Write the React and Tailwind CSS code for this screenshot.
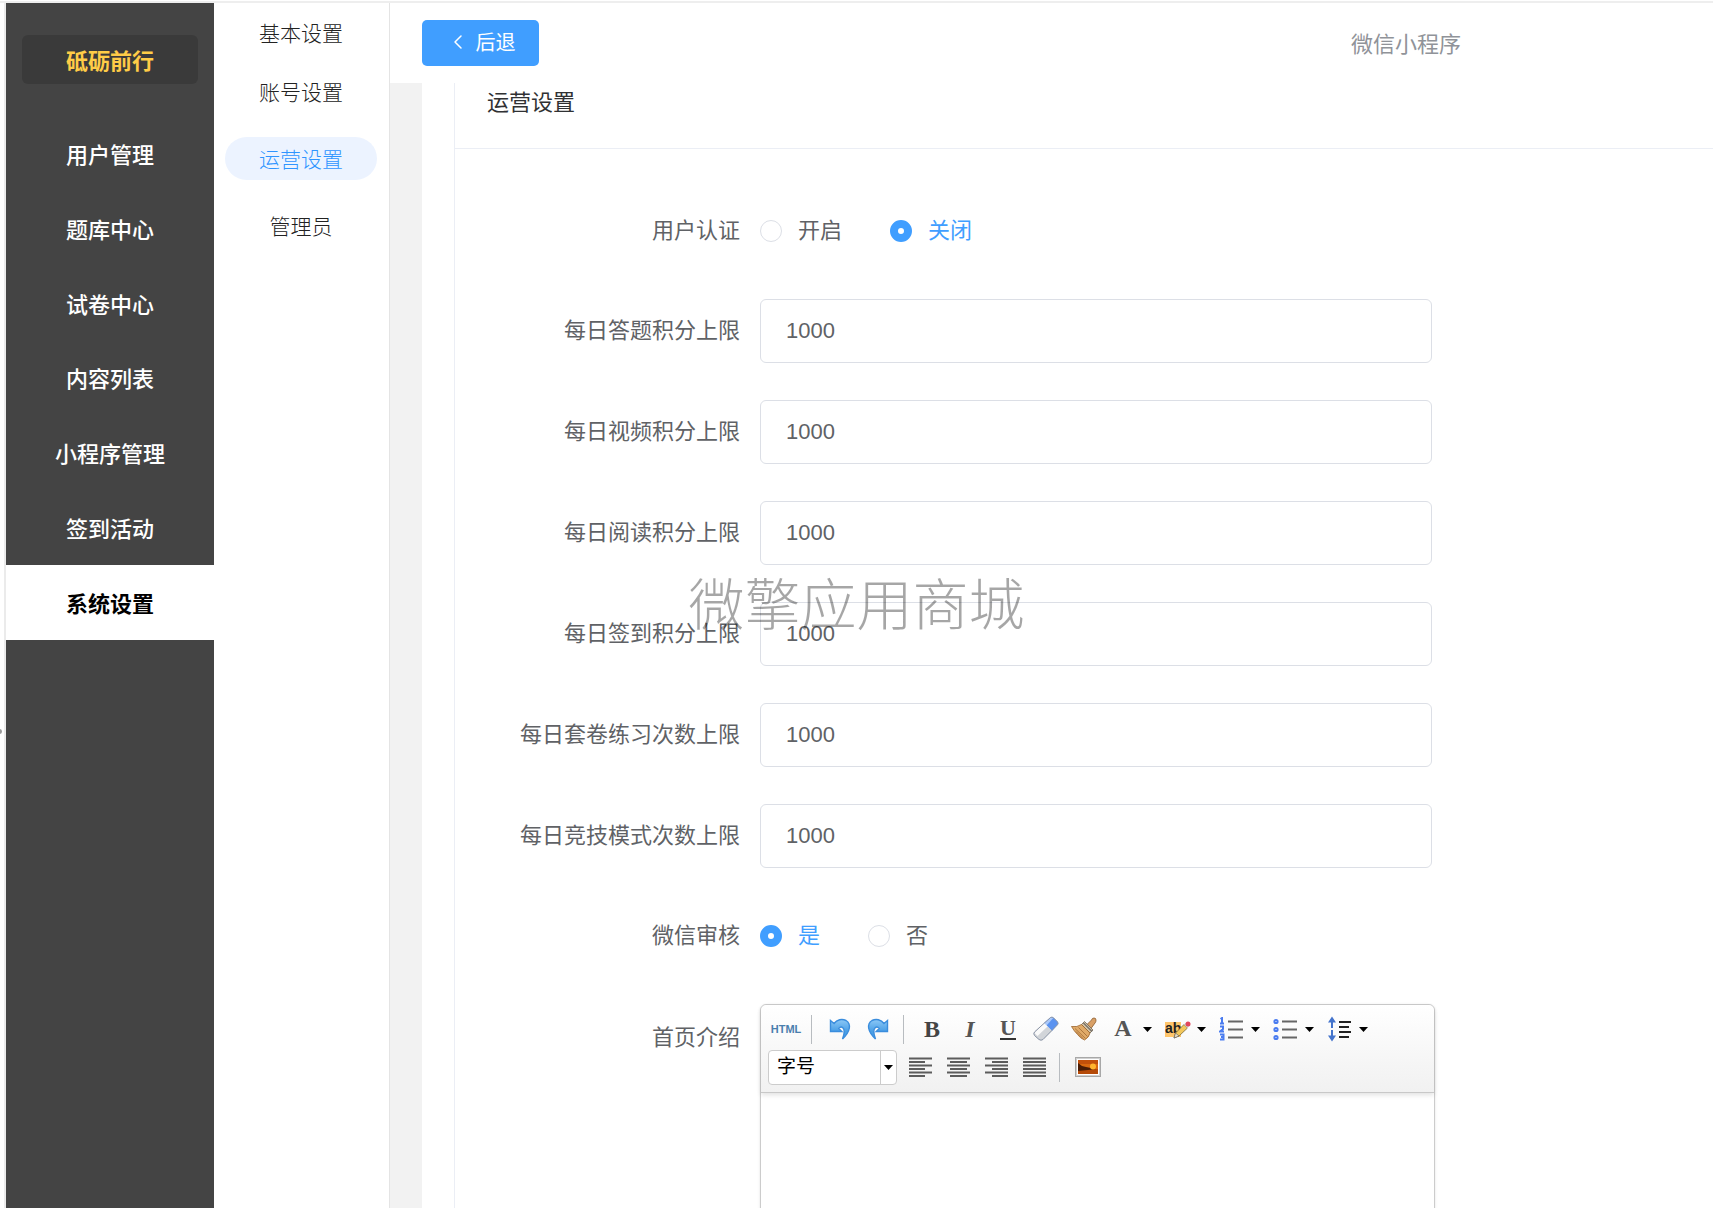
import { useState } from "react";
import { ChevronLeft } from "lucide-react";

const MENU = ["用户管理", "题库中心", "试卷中心", "内容列表", "小程序管理", "签到活动", "系统设置"];
const SUB_MENU = ["基本设置", "账号设置", "运营设置", "管理员"];

const LIMITS = [
  { id: "answer", label: "每日答题积分上限" },
  { id: "video", label: "每日视频积分上限" },
  { id: "read", label: "每日阅读积分上限" },
  { id: "sign", label: "每日签到积分上限" },
  { id: "paper", label: "每日套卷练习次数上限" },
  { id: "arena", label: "每日竞技模式次数上限" },
];

function Sidebar() {
  return (
    <aside className="w-[210px] shrink-0 border-l-2 border-[#ebebeb] bg-[#444] pt-8">
      <div className="mx-4 flex h-[49px] items-center justify-center rounded-md bg-[#3a3a3a] pb-0.5 font-bold text-[#ffcc47]">
        砥砺前行
      </div>
      <nav className="mt-[33px] grid h-[523px] grid-rows-7">
        {MENU.map((item) => (
          <a
            key={item}
            href="#"
            className={
              item === "系统设置"
                ? "flex items-center justify-center bg-white pb-0.5 font-bold text-black"
                : "flex items-center justify-center pb-0.5 font-medium text-white"
            }
          >
            {item}
          </a>
        ))}
      </nav>
    </aside>
  );
}

function SubMenu() {
  return (
    <nav className="flex w-[176px] shrink-0 flex-col gap-4 border-r border-[#e4e4e4] pt-2 pr-3 pl-[11px] text-[21px] font-light">
      {SUB_MENU.map((item) => (
        <a
          key={item}
          href="#"
          className={
            item === "运营设置"
              ? "my-2 flex h-[43px] items-center justify-center rounded-full bg-[#ecf3ff] pb-0.5 text-[#2f95ff]"
              : "flex h-[43px] items-center justify-center pb-0.5 text-[#222]"
          }
        >
          {item}
        </a>
      ))}
    </nav>
  );
}

function RadioRow({ label, name, options, initial }) {
  const [value, setValue] = useState(initial);

  return (
    <div role="radiogroup" aria-label={label} className="flex h-[62px] items-center gap-5">
      <span className="w-[255px] shrink-0 text-right">{label}</span>
      <div className="flex gap-12">
        {options.map((o) => (
          <label
            key={o}
            className={value === o ? "flex items-center gap-4 text-[#409eff]" : "flex items-center gap-4"}
          >
            <input
              type="radio"
              name={name}
              checked={value === o}
              onChange={() => setValue(o)}
              className="size-[22px] appearance-none rounded-full border border-[#dcdfe6] bg-white checked:border-8 checked:border-[#409eff]"
            />
            {o}
          </label>
        ))}
      </div>
    </div>
  );
}

function LimitRow({ id, label }) {
  return (
    <div className="flex items-center gap-5">
      <label htmlFor={id} className="w-[255px] shrink-0 text-right">
        {label}
      </label>
      <input
        id={id}
        type="text"
        defaultValue="1000"
        className="h-16 w-full max-w-[672px] rounded-md border border-[#dcdfe6] px-[25px] outline-none"
      />
    </div>
  );
}

function Caret() {
  return (
    <svg width="9" height="5" viewBox="0 0 9 5" aria-hidden="true">
      <path d="M0 0h9L4.500 5z" fill="#000" />
    </svg>
  );
}

function Tool({ title, children }) {
  return (
    <button type="button" title={title} className="flex h-[38px] w-[38px] shrink-0 items-center justify-center">
      {children}
    </button>
  );
}

function DropTool({ title, children }) {
  return (
    <button type="button" title={title} className="flex h-[38px] w-[54px] shrink-0 items-center gap-2 pl-2">
      {children}
      <Caret />
    </button>
  );
}

function Separator() {
  return <span className="mr-[9px] ml-1.5 h-[29px] w-px shrink-0 bg-[#b8bcc0]" />;
}

function UndoArrow({ flip }) {
  return (
    <svg width="24" height="24" viewBox="0 0 24 24" className={flip ? "-scale-x-100" : ""}>
      <defs>
        <linearGradient id="undoFill" x1="0" y1="0" x2="0" y2="1">
          <stop offset="0" stopColor="#8cc8f6" />
          <stop offset="0.600" stopColor="#4a9fe6" />
          <stop offset="1" stopColor="#4a9fe6" />
        </linearGradient>
      </defs>
      <path
        d="M2.500 3.500l3.500 3C9 2.500 14 1.500 18 3.500c5.500 3.500 4.500 11-3.500 18.500 2-5.500 2.500-9.500.3-11.300-1.400-1.100-2.800-.6-4 .8l3 3H2.500z"
        fill="url(#undoFill)"
        stroke="#3a8ddd"
        strokeWidth="1.400"
      />
    </svg>
  );
}

function Eraser() {
  return (
    <svg width="28" height="26" viewBox="0 0 28 26">
      <path d="M12 7L18.500 1.500q1.500-1 3 .3l4 4q1.300 1.500 0 3L20 15z" fill="#5b93f0" />
      <path d="M12 7L18.500 1.500q1.500-1 3 .3L14.500 9.500z" fill="#a9c8fa" />
      <path d="M12 7l8 8-9 8.500q-2 1.500-4 0L2.500 19.500q-1.500-1.800 0-3.500z" fill="#d2d5d9" />
      <path d="M12 7l3.500 3.500L5.500 20 2.500 17z" fill="#fafafa" />
      <path
        d="M2.500 16L18.500 1.500q1.500-1 3 .3l4 4q1.300 1.500 0 3L11 23.500q-2 1.500-4 0L2.500 19.500q-1.500-1.800 0-3.500z"
        fill="none"
        stroke="#8a94a6"
        strokeWidth="1"
      />
    </svg>
  );
}

function Brush() {
  return (
    <svg width="26" height="24" viewBox="0 0 26 24">
      <path d="M16 7.500L20.500 3q.5-2 2.500-2t2 2-1 3L20 11.500z" fill="#d9a066" stroke="#8a5a2b" strokeWidth=".8" />
      <path d="M13.500 4.500l8.500 8.500-3 3-8.500-8.500z" fill="#d8c7a8" stroke="#6e6455" strokeWidth=".8" />
      <path d="M12.500 6l8.500 8.500" stroke="#77726a" strokeWidth="1.400" />
      <path d="M10.500 7.500L19 16q-1 4.500-5.500 7-4-1.500-7-5.500Q3 14 .5 9.500q5.500 1 10-2z" fill="#e0aa68" stroke="#9a6229" strokeWidth=".8" />
      <path d="M4 11.500l10.500 10M7.500 10.500l9 9M5 14.500l7 7" stroke="#a8713a" strokeWidth=".9" fill="none" />
    </svg>
  );
}

function Highlight() {
  return (
    <span className="relative flex size-6 items-center">
      <span className="h-[15px] w-4 bg-[#ffc56b] text-center font-['Liberation_Sans'] text-[14px] leading-[13px] font-bold text-[#222]">
        ab
      </span>
      <svg width="18" height="18" viewBox="0 0 18 18" className="absolute top-1 left-2">
        <path d="M1 17l1.500-5L11 3.500l3.500 3.500L6 15z" fill="#f3c75a" stroke="#7a6a3a" strokeWidth=".8" />
        <path d="M1 17l1.500-5L6 15z" fill="#f0e2c8" stroke="#555" strokeWidth=".6" />
        <path d="M11 3.500l1.500-1.500 3.500 3.500L14.500 7z" fill="#c9ccd2" />
        <circle cx="15" cy="3" r="2.500" fill="#e2475c" />
      </svg>
    </span>
  );
}

function OrderedList() {
  return (
    <svg width="24" height="24" viewBox="0 0 24 24">
      <path
        d="M1.500 2l1.500-1v5M1 6.500h4M1 9.500h3v2.500L1 14.500h4M1 17.500h3.500v5H1M2 20h2.500"
        fill="none"
        stroke="#4a7cf0"
        strokeWidth="2"
      />
      <path d="M9 4.500h15M9 12.500h15M9 20.500h15" stroke="#666" strokeWidth="1.800" />
    </svg>
  );
}

function BulletList() {
  return (
    <svg width="24" height="24" viewBox="0 0 24 24">
      <g fill="#fff" stroke="#4a7cf0" strokeWidth="2">
        <circle cx="3" cy="4.500" r="1.600" />
        <circle cx="3" cy="12.500" r="1.600" />
        <circle cx="3" cy="20.500" r="1.600" />
      </g>
      <path d="M9 4.500h15M9 12.500h15M9 20.500h15" stroke="#666" strokeWidth="1.800" />
    </svg>
  );
}

function LineHeight() {
  return (
    <svg width="24" height="26" viewBox="0 0 24 26">
      <path d="M5 .5L1 6.500h3V12h2V6.500h3zM5 25.500L1 19.500h3V14h2v5.500h3z" fill="#4474cc" />
      <path d="M12 6h12M12 11h10M12 16h12M12 21h10" stroke="#222" strokeWidth="2" />
    </svg>
  );
}

const ALIGN = {
  左对齐: "M1 1.500h23M1 5h16M1 8.500h23M1 12h16M1 15.500h23M1 19h16",
  居中: "M1 1.500h23M4 5h17M1 8.500h23M4 12h17M1 15.500h23M4 19h17",
  右对齐: "M1 1.500h23M8 5h16M1 8.500h23M8 12h16M1 15.500h23M8 19h16",
  两端对齐: "M1 1.500h23M1 5h23M1 8.500h23M1 12h23M1 15.500h23M1 19h23",
};

function Picture() {
  return (
    <svg width="26" height="20" viewBox="0 0 26 20">
      <rect x=".5" y=".5" width="25" height="19" fill="#fff" stroke="#a8a8a8" />
      <rect x="1.500" y="1.500" width="23" height="17" fill="none" stroke="#d0d0d0" />
      <rect x="3" y="3" width="20" height="14" fill="#d9680f" />
      <rect x="3" y="3" width="20" height="4" fill="#c2500b" />
      <path d="M3 12h20v5H3z" fill="#b54a08" />
      <path d="M3 6l4 3 4 1 10 2-8 1-10 1z" fill="#4a1c05" />
      <circle cx="18" cy="9.500" r="3" fill="#ffb52e" />
    </svg>
  );
}

function Editor() {
  return (
    <div className="w-full max-w-[675px] rounded-md border border-[#ccc] shadow-sm">
      <div className="relative rounded-t-md border-b border-[#c8c8c8] bg-linear-to-b from-white to-[#f1f1f1] pt-[5px] pb-1.5 pl-1.5 shadow-[0_2px_5px_rgba(0,0,0,0.12)]">
        <div className="flex items-center">
          <Tool title="HTML">
            <span className="font-['Liberation_Sans'] text-[11px] font-bold text-[#4a7fae]">HTML</span>
          </Tool>
          <Separator />
          <Tool title="撤销">
            <UndoArrow />
          </Tool>
          <Tool title="重做">
            <UndoArrow flip />
          </Tool>
          <Separator />
          <Tool title="加粗">
            <span className="font-['Liberation_Serif'] text-[24px] leading-6 font-bold text-[#444]">B</span>
          </Tool>
          <Tool title="斜体">
            <span className="font-['Liberation_Serif'] text-[24px] leading-6 font-bold text-[#555] italic">I</span>
          </Tool>
          <Tool title="下划线">
            <span className="border-b-2 border-[#333] font-['Liberation_Serif'] text-[22px] leading-5 font-bold text-[#555]">
              U
            </span>
          </Tool>
          <Tool title="清除格式">
            <Eraser />
          </Tool>
          <Tool title="格式刷">
            <Brush />
          </Tool>
          <DropTool title="字体颜色">
            <span className="w-6 pb-0.5 text-center font-['Liberation_Serif'] text-[24px] leading-6 font-bold text-[#555]">
              A
            </span>
          </DropTool>
          <DropTool title="背景色">
            <Highlight />
          </DropTool>
          <DropTool title="有序列表">
            <OrderedList />
          </DropTool>
          <DropTool title="无序列表">
            <BulletList />
          </DropTool>
          <DropTool title="行间距">
            <LineHeight />
          </DropTool>
        </div>

        <div className="flex items-center">
          <div className="relative mr-1 ml-px">
            <select
              aria-label="字号"
              className="h-[35px] w-[129px] appearance-none rounded-sm border border-[#ccc] bg-white pl-2 text-[19px] leading-7 text-black"
            >
              <option>字号</option>
              <option>12px</option>
              <option>14px</option>
              <option>16px</option>
            </select>
            <span className="pointer-events-none absolute inset-y-px right-px flex w-4 items-center justify-center border-l border-[#ccc]">
              <Caret />
            </span>
          </div>
          {Object.entries(ALIGN).map(([title, d]) => (
            <Tool key={title} title={title}>
              <svg width="24" height="20" viewBox="0 0 24 20">
                <path d={d} stroke="#5c5c5c" strokeWidth="2" />
              </svg>
            </Tool>
          ))}
          <Separator />
          <Tool title="图片">
            <Picture />
          </Tool>
        </div>
      </div>
      <textarea id="intro" className="block h-[400px] w-full resize-none p-3 outline-none" />
    </div>
  );
}

export default function App() {
  return (
    <div className="flex h-screen flex-col overflow-hidden bg-white pt-px font-['Noto_Sans_CJK_SC',sans-serif] text-[22px] leading-8 text-[#606266]">
      <div className="flex min-h-0 flex-1 border-t-2 border-[#eee] pl-1">
        <Sidebar />
        <SubMenu />

        <main className="flex min-w-0 flex-1 flex-col">
          <header className="flex h-20 shrink-0 items-center justify-between pr-[252px] pl-8">
            <button
              type="button"
              className="flex h-[46px] w-[117px] items-center justify-center gap-1.5 rounded-[5px] bg-[#409eff] pb-0.5 text-[20px] text-white"
            >
              <ChevronLeft size={24} strokeWidth={1.5} />
              后退
            </button>
            <span className="pb-0.5 text-[#909399]">微信小程序</span>
          </header>

          <div className="min-h-0 flex-1 overflow-hidden bg-[#f2f2f2] pl-8">
            <div className="min-h-full bg-white pl-8">
              <section className="border-l border-[#ebeef5]">
                <h1 className="h-[66px] border-b border-[#ebeef5] pl-8 leading-[34px] text-[#303133]">运营设置</h1>
                <form className="flex flex-col gap-[37px] pt-[51px] pl-[30px] font-['Liberation_Sans','Noto_Sans_CJK_SC',sans-serif]">
                  <RadioRow label="用户认证" name="auth" options={["开启", "关闭"]} initial="关闭" />
                  {LIMITS.map((l) => (
                    <LimitRow key={l.id} {...l} />
                  ))}
                  <RadioRow label="微信审核" name="review" options={["是", "否"]} initial="是" />
                  <div className="flex gap-5">
                    <label htmlFor="intro" className="w-[255px] shrink-0 pt-[18px] text-right">
                      首页介绍
                    </label>
                    <Editor />
                  </div>
                </form>
              </section>
            </div>
          </div>
        </main>
      </div>

      <span className="absolute top-[729px] left-[-3px] size-[5px] rounded-full bg-[#999]" />
      <div className="pointer-events-none absolute inset-0 flex items-center justify-center pb-1.5 text-[56px] font-light text-black/35">
        微擎应用商城
      </div>
    </div>
  );
}
